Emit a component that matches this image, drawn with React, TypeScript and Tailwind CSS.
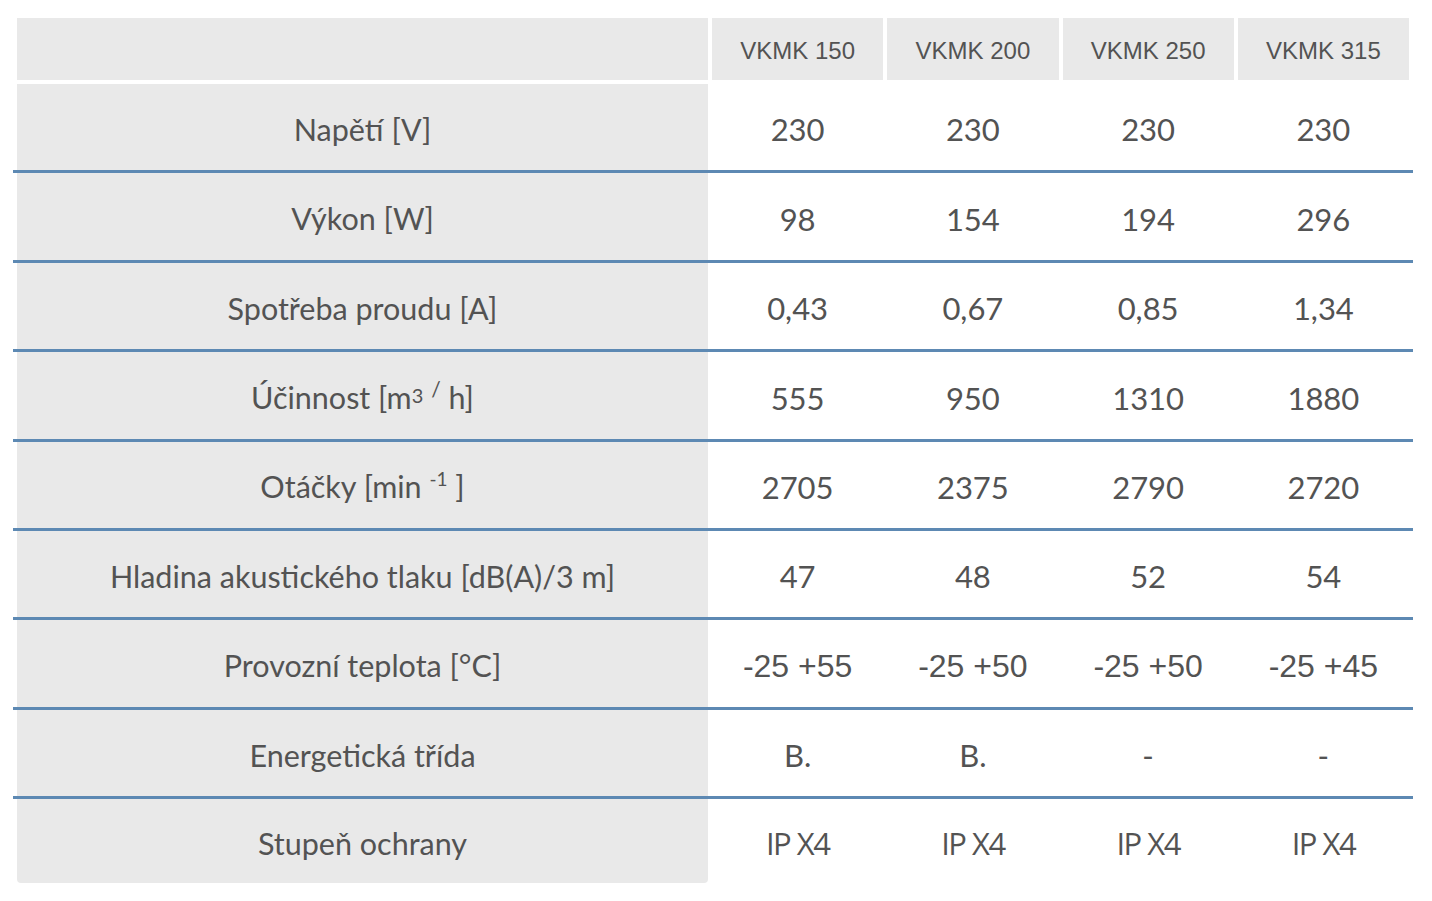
import React from "react";

const models = ["VKMK 150", "VKMK 200", "VKMK 250", "VKMK 315"];

type Row = { label: React.ReactNode; values: string[]; font?: string };

const rows: Row[] = [
  { label: "Napětí [V]", values: ["230", "230", "230", "230"] },
  { label: "Výkon [W]", values: ["98", "154", "194", "296"] },
  { label: "Spotřeba proudu [A]", values: ["0,43", "0,67", "0,85", "1,34"] },
  {
    label: (
      <>
        Účinnost [m<sup className="text-[20px] top-[-6px]">3</sup>{" "}
        <sup className="text-[21px] top-[-12px]">/</sup> h]
      </>
    ),
    values: ["555", "950", "1310", "1880"],
  },
  {
    label: (
      <>
        Otáčky [min <sup className="text-[19px] top-[-12px]">-1</sup> ]
      </>
    ),
    values: ["2705", "2375", "2790", "2720"],
  },
  { label: "Hladina akustického tlaku [dB(A)/3 m]", values: ["47", "48", "52", "54"] },
  {
    label: "Provozní teplota [°C]",
    values: ["-25 +55", "-25 +50", "-25 +50", "-25 +45"],
    font: "font-['Liberation_Sans',sans-serif] text-[32px]",
  },
  { label: "Energetická třída", values: ["B.", "B.", "-", "-"] },
  {
    label: "Stupeň ochrany",
    values: ["IP X4", "IP X4", "IP X4", "IP X4"],
    font: "font-['Open_Sans',sans-serif] tracking-[-1.5px] text-[31px]",
  },
];

export default function App() {
  return (
    <div className="min-h-[901px] bg-white pt-[18px] pl-[13px] text-[#535353]">
      <div className="w-[1400px]">
        <div className="flex h-[62px] gap-1 px-1 font-['Liberation_Sans',sans-serif] text-[24px]">
          <div className="w-[691px] bg-[#e9e9e9]" />
          {models.map((m) => (
            <div key={m} className="flex flex-1 items-center justify-center bg-[#e9e9e9] pt-[4px]">
              {m}
            </div>
          ))}
        </div>

        <div className="mt-1 font-['Lato',sans-serif]">
          {rows.map((r, i) => {
            const last = i === rows.length - 1;
            return (
              <div
                key={i}
                className={
                  last
                    ? "flex h-[84px] gap-1 px-1"
                    : "flex h-[89.4px] gap-1 border-b-[3px] border-[#5d89b3] px-1"
                }
              >
                <div
                  className={`flex w-[691px] items-center justify-center bg-[#e9e9e9] pt-[5px] text-[30.5px] ${
                    last ? "rounded-b-[4px]" : ""
                  }`}
                >
                  <span>{r.label}</span>
                </div>
                {r.values.map((v, j) => (
                  <div
                    key={j}
                    className={`flex flex-1 items-center justify-center pt-[5px] ${r.font ?? "text-[31px]"}`}
                  >
                    {v}
                  </div>
                ))}
              </div>
            );
          })}
        </div>
      </div>
    </div>
  );
}
